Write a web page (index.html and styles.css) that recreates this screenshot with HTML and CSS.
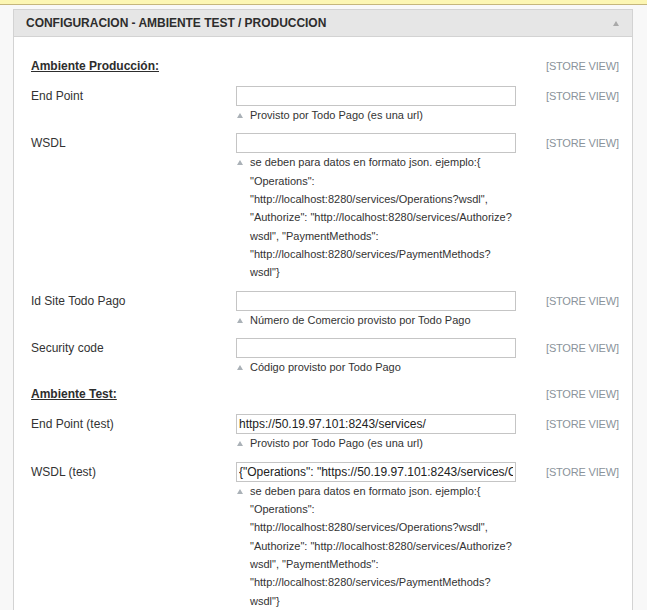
FILE: index.html
```html
<!DOCTYPE html>
<html lang="es">
<head>
<meta charset="utf-8">
<title>Configuracion</title>
<link rel="stylesheet" href="styles.css">
</head>
<body>
<div class="topbar"></div>
<div class="section">
  <div class="section-head">
    <span class="section-title">CONFIGURACION - AMBIENTE TEST / PRODUCCION</span>
    <span class="collapse"></span>
  </div>
  <div class="section-body">
    <div class="row heading-row">
      <div class="label heading">Ambiente Producción:</div>
      <div class="value"></div>
      <div class="scope">[STORE VIEW]</div>
    </div>
    <div class="row">
      <label class="label">End Point</label>
      <div class="value">
        <input class="input" type="text" value="">
        <p class="note">Provisto por Todo Pago (es una url)</p>
      </div>
      <div class="scope">[STORE VIEW]</div>
    </div>
    <div class="row">
      <label class="label">WSDL</label>
      <div class="value">
        <input class="input" type="text" value="">
        <p class="note">se deben para datos en formato json. ejemplo:{<br>"Operations":<br>"http://localhost:8280/services/Operations?wsdl",<br>"Authorize": "http://localhost:8280/services/Authorize?<br>wsdl", "PaymentMethods":<br>"http://localhost:8280/services/PaymentMethods?<br>wsdl"}</p>
      </div>
      <div class="scope">[STORE VIEW]</div>
    </div>
    <div class="row">
      <label class="label">Id Site Todo Pago</label>
      <div class="value">
        <input class="input" type="text" value="">
        <p class="note">Número de Comercio provisto por Todo Pago</p>
      </div>
      <div class="scope">[STORE VIEW]</div>
    </div>
    <div class="row">
      <label class="label">Security code</label>
      <div class="value">
        <input class="input" type="text" value="">
        <p class="note">Código provisto por Todo Pago</p>
      </div>
      <div class="scope">[STORE VIEW]</div>
    </div>
    <div class="row heading-row">
      <div class="label heading">Ambiente Test:</div>
      <div class="value"></div>
      <div class="scope">[STORE VIEW]</div>
    </div>
    <div class="row">
      <label class="label">End Point (test)</label>
      <div class="value">
        <input class="input" type="text" value="https://50.19.97.101:8243/services/">
        <p class="note">Provisto por Todo Pago (es una url)</p>
      </div>
      <div class="scope">[STORE VIEW]</div>
    </div>
    <div class="row">
      <label class="label">WSDL (test)</label>
      <div class="value">
        <input class="input" type="text" value='{"Operations": "https://50.19.97.101:8243/services/Operations?wsdl", "Authorize": "https://50.19.97.101:8243/services/Authorize?wsdl", "PaymentMethods": "https://50.19.97.101:8243/services/PaymentMethods?wsdl"}'>
        <p class="note">se deben para datos en formato json. ejemplo:{<br>"Operations":<br>"http://localhost:8280/services/Operations?wsdl",<br>"Authorize": "http://localhost:8280/services/Authorize?<br>wsdl", "PaymentMethods":<br>"http://localhost:8280/services/PaymentMethods?<br>wsdl"}</p>
      </div>
      <div class="scope">[STORE VIEW]</div>
    </div>
  </div>
</div>
</body>
</html>
```
FILE: styles.css
```css
* {
  box-sizing: border-box;
}

body {
  margin: 0;
  background: #f8f8f8;
  font-family: "Liberation Sans", Arial, sans-serif;
  font-size: 12px;
  color: #333;
}

.topbar {
  height: 5px;
  background: #fcf6b3;
  border-bottom: 1px solid #c5b67c;
}

.section {
  width: 620px;
  margin: 4px 0 0 13px;
}

.section-head {
  height: 28px;
  display: flex;
  align-items: center;
  justify-content: space-between;
  background: #e6e6e6;
  border: 1px solid #d3d3d3;
  padding: 0 13px 0 12px;
}

.section-title {
  font-weight: bold;
  font-size: 12px;
  color: #2d2d2d;
  letter-spacing: -0.03px;
}

.collapse {
  width: 0;
  height: 0;
  border-left: 3px solid transparent;
  border-right: 3px solid transparent;
  border-bottom: 5px solid #a9a9a9;
}

.section-body {
  background: #fff;
  border: 1px solid #d3d3d3;
  border-top: 0;
  padding: 20px 12px 20px 17px;
}

.row {
  display: flex;
  align-items: flex-start;
  margin-bottom: 9px;
}

.label {
  width: 205px;
  flex: none;
  line-height: 20px;
  color: #333;
}

.value {
  width: 280px;
  flex: none;
}

.scope {
  margin-left: 30px;
  line-height: 20px;
  font-size: 11px;
  letter-spacing: -0.18px;
  color: #8a939b;
  white-space: nowrap;
}

.heading-row {
  margin-bottom: 11px;
}

.heading-row .label,
.heading-row .scope {
  line-height: 18px;
}

.heading {
  font-weight: bold;
  text-decoration: underline;
  color: #2d2d2d;
}

.input {
  display: block;
  width: 280px;
  height: 20px;
  margin: 0;
  padding: 0 2px;
  border: 1px solid #c5c5c5;
  border-radius: 0;
  background: #fff;
  font-family: "Liberation Sans", Arial, sans-serif;
  font-size: 12px;
  color: #222;
  outline: none;
}

.note {
  margin: 0;
  padding-left: 14px;
  font-size: 11px;
  line-height: 18.33px;
  color: #333;
  white-space: nowrap;
}

.note::before {
  content: "";
  display: inline-block;
  width: 0;
  height: 0;
  margin-left: -13px;
  margin-right: 7px;
  border-left: 3px solid transparent;
  border-right: 3px solid transparent;
  border-bottom: 5px solid #aab1b7;
  vertical-align: 1px;
}
```
